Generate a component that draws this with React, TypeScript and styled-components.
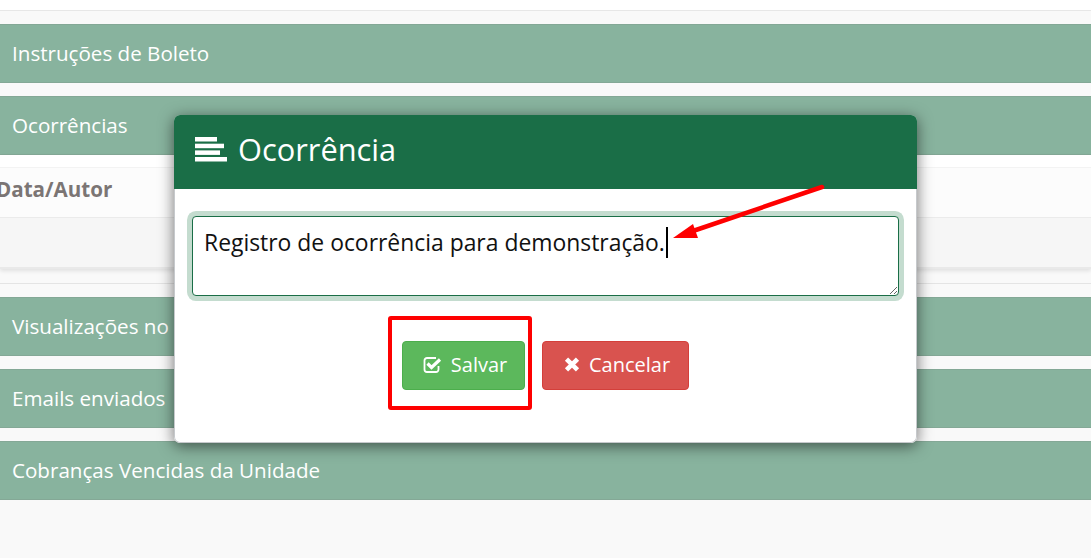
import React, { FC } from 'react';
import styled, { createGlobalStyle } from 'styled-components';

const GlobalStyle = createGlobalStyle`
  html, body {
    margin: 0;
    height: 100%;
    overflow: hidden;
    background: #f9f9f9;
  }

  body, textarea, button {
    font-family: "Open Sans", "Noto Sans", sans-serif;
  }
`;

const Page = styled.div`
  position: relative;
  height: 558px;
  overflow: hidden;
`;

const TopStrip = styled.div`
  height: 10px;
  background: #fff;
  border-bottom: 1px solid #e7e7e7;
  margin-bottom: 13px;
`;

const Bar = styled.div`
  display: flex;
  align-items: center;
  height: 59px;
  margin-bottom: 13px;
  padding: 0 0 2px 12px;
  box-sizing: border-box;
  background: #88b39e;
  border-top: 1px solid #84a896;
  border-bottom: 1px solid #84a896;
  color: #fff;
  font-size: 20.6px;
`;

const OpenBar = styled(Bar)`
  margin-bottom: 0;
`;

const Table = styled.div`
  box-shadow: 0 2px 4px rgba(0, 0, 0, 0.1);
`;

const TableTop = styled.div`
  height: 12px;
  background: #fff;
  border-bottom: 1px solid #f3f3f3;
`;

const TableHead = styled.div`
  display: flex;
  align-items: center;
  height: 50px;
  box-sizing: border-box;
  background: #fcfcfc;
  border-bottom: 1px solid #ebebeb;
  color: #7b7574;
  font-size: 20.6px;
  font-weight: 700;
`;

const HeadLabel = styled.span`
  margin-left: -4px;
  margin-top: -7px;
`;

const TableRow = styled.div`
  height: 51px;
  box-sizing: border-box;
  background: #f6f6f6;
  border-bottom: 2px solid #e9e9e9;
`;

const Divider = styled.div`
  height: 1px;
  margin: 14px 0 13px;
  background: #e4e4e4;
`;

const Modal = styled.div`
  position: absolute;
  top: 115px;
  left: 174px;
  display: flex;
  flex-direction: column;
  width: 743px;
  height: 328px;
  border-radius: 6px;
  overflow: hidden;
  background: #fff;
  box-shadow: 0 3px 15px rgba(0, 0, 0, 0.55);
`;

const ModalHeader = styled.div`
  display: flex;
  align-items: center;
  gap: 11px;
  height: 74px;
  padding: 0 0 6px 21px;
  box-sizing: border-box;
  background: #1a6e47;
  color: #fff;
  font-size: 30.8px;
`;

const ModalBody = styled.div`
  display: flex;
  flex: 1;
  flex-direction: column;
  padding: 27px 17px 0;
  border: 1px solid #c6c9cc;
  border-top: 0;
  border-radius: 0 0 6px 6px;
`;

const Note = styled.textarea`
  display: block;
  width: 100%;
  height: 80px;
  padding: 10px 11px;
  box-sizing: border-box;
  border: 1px solid #1a6e47;
  border-radius: 4px;
  outline: none;
  background: #fff;
  box-shadow: 0 0 0 5px #c4dccf;
  color: #111;
  font-size: 22.9px;
  line-height: 32px;
`;

const Actions = styled.div`
  display: flex;
  justify-content: center;
  gap: 17px;
  margin-top: 45px;
  padding-right: 1px;
`;

const ActionButton = styled.button<{ $tone: 'save' | 'cancel' }>`
  display: flex;
  align-items: center;
  justify-content: center;
  gap: 9px;
  width: ${(p) => (p.$tone === 'save' ? '123px' : '147px')};
  height: 49px;
  padding: 0 0 2px 4px;
  border: 1px solid ${(p) => (p.$tone === 'save' ? '#4cae4c' : '#d43f3a')};
  border-radius: 4px;
  background: ${(p) => (p.$tone === 'save' ? '#5cb85c' : '#d9534f')};
  color: #fff;
  font-size: 20px;
`;

const Annotations = styled.svg`
  position: absolute;
  top: 0;
  left: 0;
  pointer-events: none;
`;

const AlignIcon: FC = () => (
  <svg width="32" height="25" viewBox="0 0 32 25" fill="#fff">
    <rect x="0" y="0" width="22" height="4.5" />
    <rect x="0" y="6.7" width="29" height="4.5" />
    <rect x="0" y="13.4" width="25" height="4.5" />
    <rect x="0" y="20" width="32" height="4.5" />
  </svg>
);

const CheckIcon: FC = () => (
  <svg width="19" height="17" viewBox="0 0 19 17" fill="none" stroke="#fff">
    <path d="M13 2H4a2.5 2.5 0 0 0-2.5 2.5v9A2.5 2.5 0 0 0 4 16h9a2.5 2.5 0 0 0 2.5-2.5V10" strokeWidth="1.8" />
    <path d="M4.5 7.5 8.5 11.5 17 3.5" strokeWidth="3.2" />
  </svg>
);

const CloseIcon: FC = () => (
  <svg width="16" height="15" viewBox="0 0 16 15" fill="none" stroke="#fff" strokeWidth="4.6">
    <path d="M2.5 2.2 13.5 12.8M13.5 2.2 2.5 12.8" />
  </svg>
);

const items = ['Visualizações no', 'Emails enviados', 'Cobranças Vencidas da Unidade'];

const App: FC = () => (
  <Page>
    <GlobalStyle />
    <TopStrip />
    <Bar>Instruções de Boleto</Bar>
    <OpenBar>Ocorrências</OpenBar>
    <Table>
      <TableTop />
      <TableHead>
        <HeadLabel>Data/Autor</HeadLabel>
      </TableHead>
      <TableRow />
    </Table>
    <Divider />
    {items.map((item) => (
      <Bar key={item}>{item}</Bar>
    ))}

    <Modal>
      <ModalHeader>
        <AlignIcon />
        Ocorrência
      </ModalHeader>
      <ModalBody>
        <Note defaultValue="Registro de ocorrência para demonstração." />
        <Actions>
          <ActionButton $tone="save" type="button">
            <CheckIcon />
            Salvar
          </ActionButton>
          <ActionButton $tone="cancel" type="button">
            <CloseIcon />
            Cancelar
          </ActionButton>
        </Actions>
      </ModalBody>
    </Modal>

    <Annotations width="1091" height="558">
      <rect x="666" y="227" width="2" height="31" fill="#000" />
      <line x1="822" y1="187" x2="690" y2="232" stroke="#fe0000" strokeWidth="4.5" strokeLinecap="round" />
      <polygon points="673,238 693,224 698,238" fill="#fe0000" />
      <rect x="390" y="318" width="140" height="90" rx="1" fill="none" stroke="#fe0000" strokeWidth="4" />
    </Annotations>
  </Page>
);

export default App;
